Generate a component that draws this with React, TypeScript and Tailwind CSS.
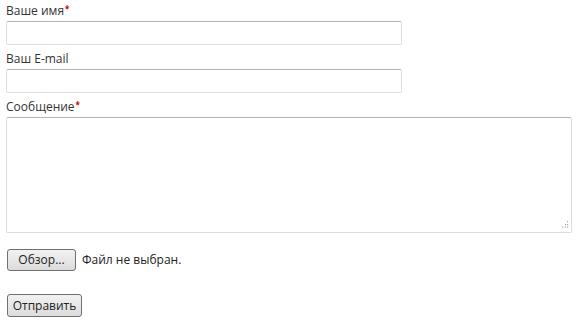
export default function App() {
  return (
    <div className="w-[583px] h-[332px] bg-white px-[6px] pt-[3px] text-[12px] text-[#333] font-['Open_Sans',sans-serif]">
      <form className="flex flex-col" onSubmit={(e) => e.preventDefault()}>
        <label className="leading-[16px] h-[18px]">
          Ваше имя<Star />
        </label>
        <input
          type="text"
          className="w-[396px] h-[24px] border border-[#ddd] border-t-[#b5b5b5] rounded-[2px] outline-none" />

        <label className="leading-[16px] h-[18px] mt-[6px]">Ваш E-mail</label>
        <input
          type="text"
          className="w-[396px] h-[24px] border border-[#ddd] border-t-[#b5b5b5] rounded-[2px] outline-none" />

        <label className="leading-[16px] h-[18px] mt-[6px]">
          Сообщение<Star />
        </label>
        <div className="relative w-[566px] h-[116px]">
          <textarea className="w-full h-full resize-none border border-[#ddd] border-t-[#b5b5b5] rounded-[2px] outline-none" />
          {/* dotted resize grip */}
          <svg className="absolute right-[3px] bottom-[5px] w-[7px] h-[7px]" viewBox="0 0 7 7">
            <rect x="5" y="0" width="1.2" height="1.2" fill="#aaa" />
            <rect x="3" y="3" width="1.2" height="1.2" fill="#aaa" />
            <rect x="5" y="3" width="1.2" height="1.2" fill="#aaa" />
            <rect x="0" y="5.5" width="1.2" height="1.2" fill="#aaa" />
            <rect x="3" y="5.5" width="1.2" height="1.2" fill="#aaa" />
            <rect x="5" y="5.5" width="1.2" height="1.2" fill="#aaa" />
          </svg>
        </div>

        <div className="flex items-center gap-[6px] mt-[16px] ml-[1px]">
          <button
            type="button"
            className="w-[69px] h-[22px] rounded-[3px] border border-[#707070] bg-gradient-to-b from-[#f2f2f2] to-[#dcdcdc] text-[12px] text-[#222] font-['Open_Sans',sans-serif]">
            Обзор...
          </button>
          <span className="text-[#222] text-[12px]">Файл не выбран.</span>
        </div>

        <div className="mt-[23px] ml-[1px]">
          <button
            type="submit"
            className="w-[75px] h-[23px] rounded-[3px] border border-[#707070] bg-gradient-to-b from-[#f2f2f2] to-[#dcdcdc] text-[12px] text-[#222] font-['Open_Sans',sans-serif]">
            Отправить
          </button>
        </div>
      </form>
    </div>);

}

function Star() {
  return <span className="relative -top-[3px] ml-[1px] text-[8px] font-bold text-[#c00]">*</span>;
}
